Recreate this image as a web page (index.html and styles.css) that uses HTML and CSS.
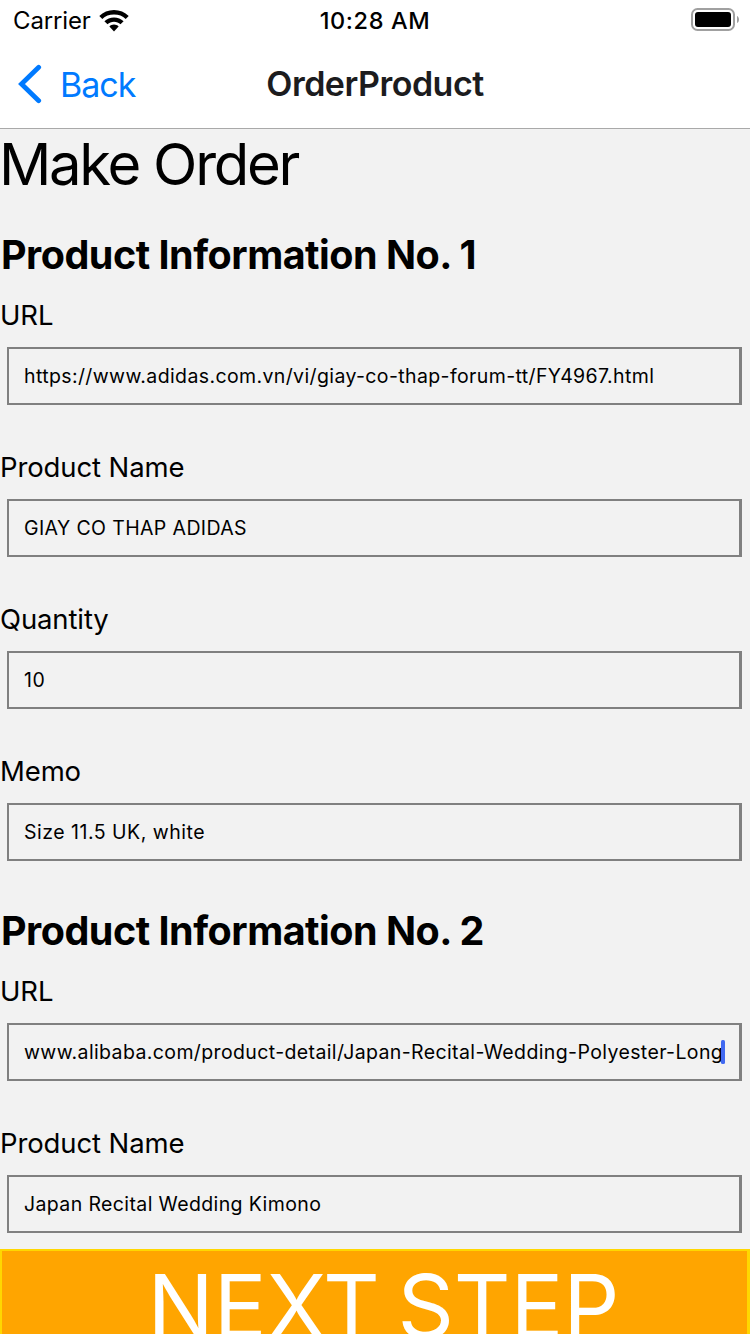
FILE: index.html
```html
<!DOCTYPE html>
<html lang="en">
<head>
<meta charset="utf-8">
<title>OrderProduct</title>
<link rel="stylesheet" href="styles.css">
</head>
<body>
<header class="top">
  <div class="status">
    <div class="carrier"><span>Carrier</span>
      <svg class="wifi" viewBox="0 0 30 22" width="30" height="22"><path d="M15 0C9.300 0 4.100 2.200.3 5.900l3 3C6.300 6 10.300 4.600 15 4.600s8.700 1.400 11.700 4.300l3-3C25.900 2.200 20.700 0 15 0z"/><path d="M15 7.400c-3.700 0-7.100 1.400-9.600 3.800l3.100 3.100C10.200 12.700 12.400 11.800 15 11.800s4.800.9 6.500 2.500l3.100-3.100C22.100 8.800 18.700 7.400 15 7.400z"/><path d="M15 14.600c-1.800 0-3.400.7-4.600 1.800L15 21.400l4.600-5C18.400 15.300 16.800 14.600 15 14.600z"/></svg>
    </div>
    <div class="time">10:28 AM</div>
    <svg class="battery" viewBox="0 0 50 24" width="50" height="24"><rect x="1" y="1" width="42" height="21" rx="5.500" fill="none" stroke="#a0a0a0" stroke-width="2"/><rect x="4" y="4" width="36" height="15" rx="3"/><path d="M46 8c2.700 1 2.700 6 0 7z" fill="#a0a0a0"/></svg>
  </div>
  <nav class="nav">
    <a class="back"><svg viewBox="0 0 24 40" width="24" height="40"><path d="M20.700 3.300 3.500 20l17.200 16.700" fill="none" stroke="#007aff" stroke-width="4.800" stroke-linecap="round"/></svg><span>Back</span></a>
    <div class="title">OrderProduct</div>
    <div></div>
  </nav>
</header>
<main class="page">
  <h1>Make Order</h1>
  <section>
    <h2>Product Information No. 1</h2>
    <label class="field"><span class="label">URL</span><span class="input">https://www.adidas.com.vn/vi/giay-co-thap-forum-tt/FY4967.html</span></label>
    <label class="field"><span class="label">Product Name</span><span class="input">GIAY CO THAP ADIDAS</span></label>
    <label class="field"><span class="label">Quantity</span><span class="input wide">10</span></label>
    <label class="field"><span class="label">Memo</span><span class="input wide">Size 11.5 UK, white</span></label>
  </section>
  <section>
    <h2>Product Information No. 2</h2>
    <label class="field"><span class="label">URL</span><span class="input">www.alibaba.com/product-detail/Japan-Recital-Wedding-Polyester-Long<i class="caret"></i></span></label>
    <label class="field"><span class="label">Product Name</span><span class="input">Japan Recital Wedding Kimono</span></label>
  </section>
</main>
<footer class="next">NEXT STEP</footer>
</body>
</html>
```
FILE: styles.css
```css
* { box-sizing: border-box; }
body { margin: 0; width: 750px; height: 1334px; overflow: hidden; display: flex; flex-direction: column; background: #f2f2f2; color: #000; font-family: Inter, sans-serif; white-space: nowrap; }
.top { height: 129px; flex: none; background: #fff; border-bottom: 1px solid #a9a9a9; }
.status { height: 40px; display: grid; grid-template-columns: 1fr auto 1fr; align-items: center; padding: 0 9px 0 13px; }
.carrier { display: flex; align-items: center; gap: 9px; font-size: 24px; letter-spacing: -.13px; padding-top: 1px; }
.wifi { margin-left: -1px; }
.time { font-size: 23.500px; font-weight: 550; letter-spacing: .6px; padding-top: 1px; margin-left: -4px; }
.battery { justify-self: end; }
.nav { height: 88px; display: grid; grid-template-columns: 1fr auto 1fr; align-items: center; padding: 0 18px; }
.back { display: flex; align-items: center; gap: 18px; font-size: 34px; letter-spacing: -1px; color: #007aff; }
.title { font-size: 34px; font-weight: 600; letter-spacing: -.5px; color: #1c1c1e; padding-bottom: 2px; }
.page { height: 1120px; flex: none; overflow: hidden; }
h1 { margin: 0 0 0 -1px; height: 72px; line-height: 71px; font-size: 58px; font-weight: 400; letter-spacing: -2.300px; }
h2 { margin: 0; height: 98px; line-height: 48px; padding: 30px 0 0 1px; font-size: 39.500px; font-weight: 700; letter-spacing: -.5px; }
section + section h2 { height: 68px; padding-top: 0; }
.field { display: block; height: 152px; }
.label { display: block; height: 48px; line-height: 33px; font-size: 27.500px; letter-spacing: -.12px; }
.input { display: flex; align-items: center; height: 58px; margin: 0 8px 0 7px; padding-left: 15px; border: 2px solid #808080; border-right-width: 3px; font-size: 19.500px; letter-spacing: .38px; }
.input.wide { letter-spacing: .5px; }
.caret { width: 4px; height: 24px; margin-left: -2px; border-radius: 1.500px; background: #4169f1; }
.next { height: 85px; flex: none; background: #ffa500; border: 2px solid #ffd700; border-right-width: 3px; border-bottom: 0; padding-left: 18px; text-align: center; color: #fff; font-size: 88px; letter-spacing: -.1px; word-spacing: -7px; line-height: 110px; }
```
